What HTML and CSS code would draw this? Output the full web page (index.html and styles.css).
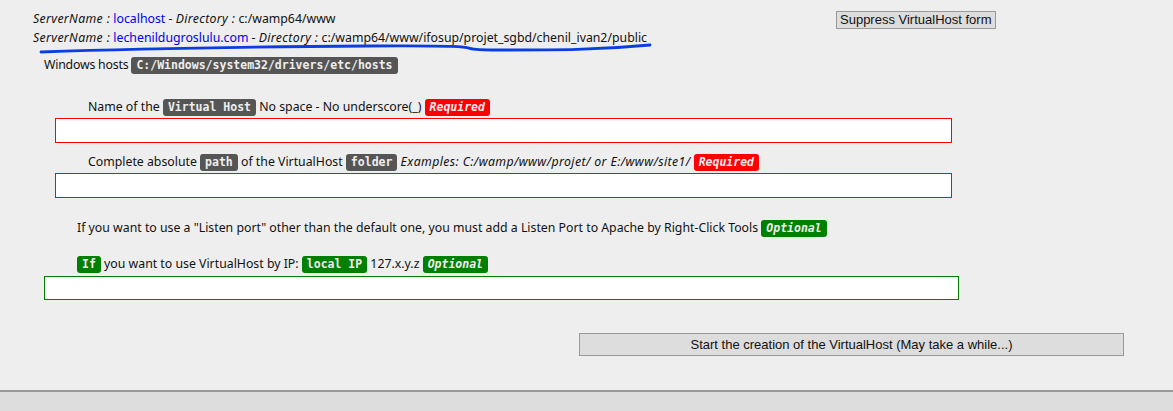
FILE: index.html
```html
<!DOCTYPE html>
<html>
<head>
<meta charset="utf-8">
<link rel="stylesheet" href="styles.css">
</head>
<body>
<div class="page">
  <div class="top">
    <div class="servers">
      <div class="srv"><i>ServerName :</i> <span class="link">localhost</span> - <i>Directory :</i> c:/wamp64/www</div>
      <div class="srv"><i>ServerName :</i> <span class="link">lechenildugroslulu.com</span> - <i>Directory :</i> c:/wamp64/www/ifosup/projet_sgbd/chenil_ivan2/public</div>
    </div>
    <button class="suppress">Suppress VirtualHost form</button>
  </div>
  <svg class="scribble" width="620" height="16" viewBox="0 0 620 16"><path d="M3 12 C 60 10, 180 7, 330 6 S 400 10, 460 10 S 560 10, 612 5" fill="none" stroke="#0a3ee0" stroke-width="2.8" stroke-linecap="round"/></svg>
  <div class="hosts">Windows hosts <code class="b dark">C:/Windows/system32/drivers/etc/hosts</code></div>

  <div class="label l1">Name of the <code class="b dark">Virtual Host</code> No space - No underscore(_) <code class="b red"><em>Required</em></code></div>
  <input class="field red-f f1" type="text">

  <div class="label l2">Complete absolute <code class="b dark">path</code> of the VirtualHost <code class="b dark">folder</code> <em class="ex">Examples: C:/wamp/www/projet/ or E:/www/site1/</em> <code class="b red"><em>Required</em></code></div>
  <input class="field red-f f2" type="text">

  <div class="label l3">If you want to use a "Listen port" other than the default one, you must add a Listen Port to Apache by Right-Click Tools <code class="b green"><em>Optional</em></code></div>

  <div class="label l4"><code class="b green">If</code> you want to use VirtualHost by IP: <code class="b green">local IP</code> 127.x.y.z <code class="b green"><em>Optional</em></code></div>
  <input class="field green-f" type="text">

  <div class="submit-row"><button class="start">Start the creation of the VirtualHost (May take a while...)</button></div>
</div>
<div class="footer"></div>
</body>
</html>
```
FILE: styles.css
```css
html, body { margin: 0; padding: 0; }
body {
  background: #eeeeee;
  font-family: "Noto Sans", "Open Sans", sans-serif;
  font-size: 12.3px;
  color: #111;
}
.page {
  height: 390px;
  position: relative;
  display: flex;
  flex-direction: column;
}
.top {
  display: flex;
  align-items: flex-start;
  padding: 9px 0 0 33px;
}
.servers { width: 803px; }
.srv { line-height: 19px; white-space: nowrap; }
.srv i { font-style: italic; letter-spacing: 0.35px; }
.link { color: #0000ee; }
.suppress {
  font-family: "Liberation Sans", Arial, sans-serif;
  font-size: 13px;
  background: #dddddd;
  border: 1px solid #999;
  padding: 0 3px;
  height: 18px;
  line-height: 16px;
  margin-top: 2px;
  color: #111;
}
.scribble {
  position: absolute;
  left: 38px;
  top: 40px;
}
.hosts {
  margin: 9px 0 0 44px;
  line-height: 18px;
  letter-spacing: -0.2px;
}
.b {
  font-family: "DejaVu Sans Mono", monospace;
  font-size: 11.5px;
  font-weight: bold;
  color: #eee;
  border-radius: 3px;
  padding: 1px 5px 2px;
  letter-spacing: 0;
}
.b em { font-style: italic; letter-spacing: 0; }
.dark { background: #555; }
.red { background: #f00; }
.green { background: #008000; }
.label { line-height: 18px; white-space: nowrap; }
.l1 { margin: 24px 0 0 88px; }
.l2 { margin: 10px 0 0 88px; }
.ex { font-style: italic; letter-spacing: 0.4px; }
.l3 { margin: 21px 0 0 77px; }
.l4 { margin: 18px 0 0 77px; }
.field {
  display: block;
  box-sizing: border-box;
  background: #fff;
  height: 25px;
  padding: 0;
  margin: 2px 0 0 55px;
  width: 897px;
  outline: none;
}
.red-f { border: 1px solid #f00; }
.green-f { border: 1px solid #008000; margin: 3px 0 0 44px; width: 915px; height: 24px; }
.submit-row {
  margin: 33px 0 0 579px;
}
.start {
  font-family: "Liberation Sans", Arial, sans-serif;
  font-size: 13px;
  width: 545px;
  height: 23px;
  background: #dddddd;
  border: 1px solid #999;
  color: #111;
  padding: 0;
}
.footer {
  border-top: 2px solid #999;
  background: #dddddd;
  height: 20px;
}
```
